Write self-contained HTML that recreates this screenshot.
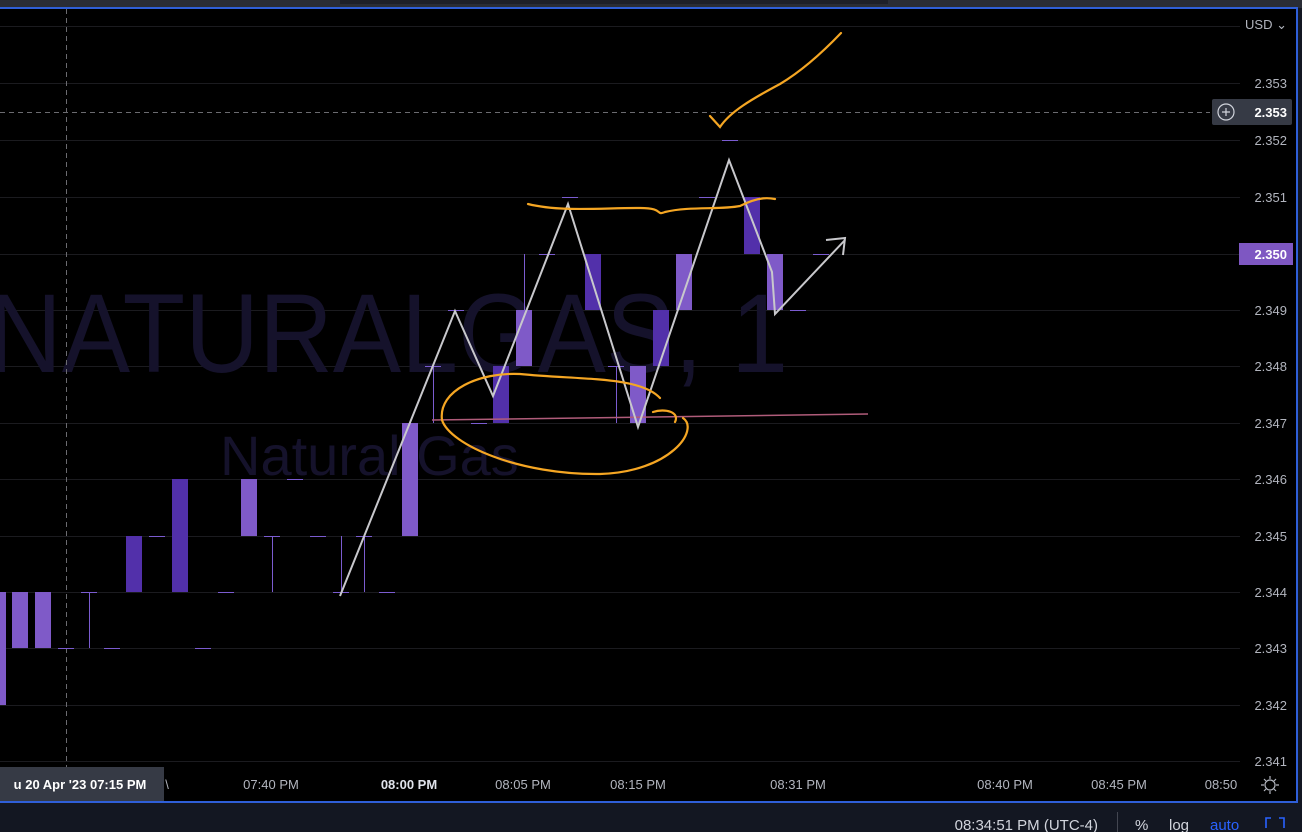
<!DOCTYPE html>
<html><head><meta charset="utf-8"><style>
html,body{margin:0;padding:0;width:1302px;height:832px;overflow:hidden;background:#131722;font-family:"Liberation Sans",sans-serif;}
#top{position:absolute;left:0;top:0;width:1302px;height:8px;background:#2a2d36}
#topin{position:absolute;left:340px;top:0;width:548px;height:4px;background:#1e2029}
#chart{position:absolute;left:0;top:7px;width:1296px;height:792px;background:#000;border:2px solid #2f5fd8;border-left:none;}
svg{position:absolute;left:0;top:0}
</style></head><body>
<div id="top"><div id="topin"></div></div>
<div id="chart"></div>
<svg width="1302" height="832" viewBox="0 0 1302 832">
<g stroke="#1b1b1f" stroke-width="1">
<line x1="0" y1="26.5" x2="1240" y2="26.5"/><line x1="0" y1="83.5" x2="1240" y2="83.5"/>
<line x1="0" y1="140.5" x2="1240" y2="140.5"/><line x1="0" y1="197.5" x2="1240" y2="197.5"/>
<line x1="0" y1="254.5" x2="1240" y2="254.5"/><line x1="0" y1="310.5" x2="1240" y2="310.5"/>
<line x1="0" y1="366.5" x2="1240" y2="366.5"/><line x1="0" y1="423.5" x2="1240" y2="423.5"/>
<line x1="0" y1="479.5" x2="1240" y2="479.5"/><line x1="0" y1="536.5" x2="1240" y2="536.5"/>
<line x1="0" y1="592.5" x2="1240" y2="592.5"/><line x1="0" y1="648.5" x2="1240" y2="648.5"/>
<line x1="0" y1="705.5" x2="1240" y2="705.5"/><line x1="0" y1="761.5" x2="1240" y2="761.5"/>
</g>
<text x="-12" y="372" font-size="112" fill="#15122b" font-family="Liberation Sans, sans-serif" textLength="800" lengthAdjust="spacingAndGlyphs">NATURALGAS, 1</text>
<text x="220" y="475" font-size="56" fill="#15122b" font-family="Liberation Sans, sans-serif">Natural Gas</text>
<g stroke="#6b6b70" stroke-dasharray="5,4" stroke-width="1">
<line x1="66.5" y1="9" x2="66.5" y2="770"/><line x1="0" y1="112.5" x2="1210" y2="112.5"/>
</g>
<g stroke="#7b5cd0" stroke-width="1">
<line x1="58" y1="648.5" x2="74" y2="648.5"/><line x1="81" y1="592.5" x2="97" y2="592.5"/><line x1="89.5" y1="592" x2="89.5" y2="648"/>
<line x1="104" y1="648.5" x2="120" y2="648.5"/><line x1="149" y1="536.5" x2="165" y2="536.5"/>
<line x1="195" y1="648.5" x2="211" y2="648.5"/><line x1="218" y1="592.5" x2="234" y2="592.5"/>
<line x1="264" y1="536.5" x2="280" y2="536.5"/><line x1="272.5" y1="536" x2="272.5" y2="592"/>
<line x1="287" y1="479.5" x2="303" y2="479.5"/><line x1="310" y1="536.5" x2="326" y2="536.5"/>
<line x1="341.5" y1="536" x2="341.5" y2="592"/><line x1="333" y1="592.5" x2="349" y2="592.5"/>
<line x1="356" y1="536.5" x2="372" y2="536.5"/><line x1="364.5" y1="536" x2="364.5" y2="592"/>
<line x1="379" y1="592.5" x2="395" y2="592.5"/>
<line x1="425" y1="366.5" x2="441" y2="366.5"/><line x1="433.5" y1="366" x2="433.5" y2="423"/>
<line x1="448" y1="310.5" x2="464" y2="310.5"/><line x1="471" y1="423.5" x2="487" y2="423.5"/>
<line x1="524.5" y1="254" x2="524.5" y2="310"/><line x1="539" y1="254.5" x2="555" y2="254.5"/>
<line x1="562" y1="197.5" x2="578" y2="197.5"/>
<line x1="616.5" y1="366" x2="616.5" y2="423"/><line x1="608" y1="366.5" x2="624" y2="366.5"/>
<line x1="699" y1="197.5" x2="715" y2="197.5"/><line x1="722" y1="140.5" x2="738" y2="140.5"/>
<line x1="790" y1="310.5" x2="806" y2="310.5"/><line x1="813" y1="254.5" x2="829" y2="254.5"/>
</g>
<g fill="#7f5ac8">
<rect x="0" y="592" width="6" height="113"/><rect x="12" y="592" width="16" height="56"/><rect x="35" y="592" width="16" height="56"/>
<rect x="241" y="479" width="16" height="57"/><rect x="402" y="423" width="16" height="113"/>
<rect x="516" y="310" width="16" height="56"/><rect x="630" y="366" width="16" height="57"/>
<rect x="676" y="254" width="16" height="56"/><rect x="767" y="254" width="16" height="56"/>
</g>
<g fill="#5230aa">
<rect x="126" y="536" width="16" height="56"/><rect x="172" y="479" width="16" height="113"/>
<rect x="493" y="366" width="16" height="57"/><rect x="585" y="254" width="16" height="56"/>
<rect x="653" y="310" width="16" height="56"/><rect x="744" y="197" width="16" height="57"/>
</g>
<line x1="432" y1="420" x2="868" y2="414" stroke="#b05c7a" stroke-width="1.5"/>
<g fill="none" stroke="#c8c8cc" stroke-width="2" stroke-linejoin="miter">
<polyline points="340,596 455,311 493,396 568,204 638,427 729,160 772,272 775,314 845,240"/>
<polyline points="826,240 845,238 843,255"/>
</g>
<g fill="none" stroke="#f5a623" stroke-width="2.2" stroke-linecap="round">
<path d="M528,204 C560,212 600,208 640,208 C665,208 655,216 665,212 C690,206 720,210 740,206 C760,196 770,198 775,199"/>
<path d="M710,116 L720,127 C730,112 750,100 780,84 C800,72 820,55 841,33"/>
<path d="M675,422 C680,412 665,408 653,412 M683,418 C700,430 670,472 600,474 C520,475 450,445 442,420 C438,390 480,372 520,374 C580,380 640,376 660,398"/>
</g>
<g font-size="13" fill="#b2b5be" text-anchor="end">
<text x="1287" y="29">USD ⌄</text>
<text x="1287" y="88">2.353</text><text x="1287" y="145">2.352</text><text x="1287" y="202">2.351</text>
<text x="1287" y="315">2.349</text><text x="1287" y="371">2.348</text><text x="1287" y="428">2.347</text>
<text x="1287" y="484">2.346</text><text x="1287" y="541">2.345</text><text x="1287" y="597">2.344</text>
<text x="1287" y="653">2.343</text><text x="1287" y="710">2.342</text><text x="1287" y="766">2.341</text>
</g>
<rect x="1212" y="99" width="80" height="26" rx="2" fill="#363a45"/>
<circle cx="1226" cy="112" r="8" fill="none" stroke="#d1d4dc" stroke-width="1.2"/>
<path d="M1222 112h8M1226 108v8" stroke="#d1d4dc" stroke-width="1.2"/>
<text x="1287" y="117" font-size="13" font-weight="bold" fill="#fff" text-anchor="end">2.353</text>
<rect x="1239" y="243" width="54" height="22" fill="#7e57c2"/>
<text x="1287" y="259" font-size="13" font-weight="bold" fill="#fff" text-anchor="end">2.350</text>
<rect x="0" y="767" width="164" height="34" fill="#363a45"/>
<g font-size="13" fill="#b2b5be" text-anchor="middle">
<text x="80" y="789" fill="#fff" font-weight="bold">u 20 Apr '23   07:15 PM</text>
<text x="167" y="789">\</text>
<text x="271" y="789">07:40 PM</text>
<text x="409" y="789" fill="#e0e3eb" font-weight="bold">08:00 PM</text>
<text x="523" y="789">08:05 PM</text><text x="638" y="789">08:15 PM</text>
<text x="798" y="789">08:31 PM</text><text x="1005" y="789">08:40 PM</text>
<text x="1119" y="789">08:45 PM</text><text x="1221" y="789">08:50</text>
</g>
<circle cx="1270" cy="785" r="5" fill="none" stroke="#b2b5be" stroke-width="1.2"/>
<g stroke="#b2b5be" stroke-width="1.2"><path d="M1270 776v3M1270 791v3M1261 785h3M1276 785h3M1264 779l2 2M1274 789l2 2M1276 779l-2 2M1266 789l-2 2"/></g>
<line x1="1117.5" y1="812" x2="1117.5" y2="832" stroke="#434651"/>
<text x="1098" y="830" font-size="15" fill="#d1d4dc" text-anchor="end">08:34:51 PM (UTC-4)</text>
<text x="1135" y="830" font-size="15" fill="#d1d4dc">%</text>
<text x="1169" y="830" font-size="15" fill="#d1d4dc">log</text>
<text x="1210" y="830" font-size="15" fill="#2962ff">auto</text>
<path d="M1266 828v-10h5M1279 818h5v10" fill="none" stroke="#2962ff" stroke-width="1.6"/>
</svg>
</body></html>
